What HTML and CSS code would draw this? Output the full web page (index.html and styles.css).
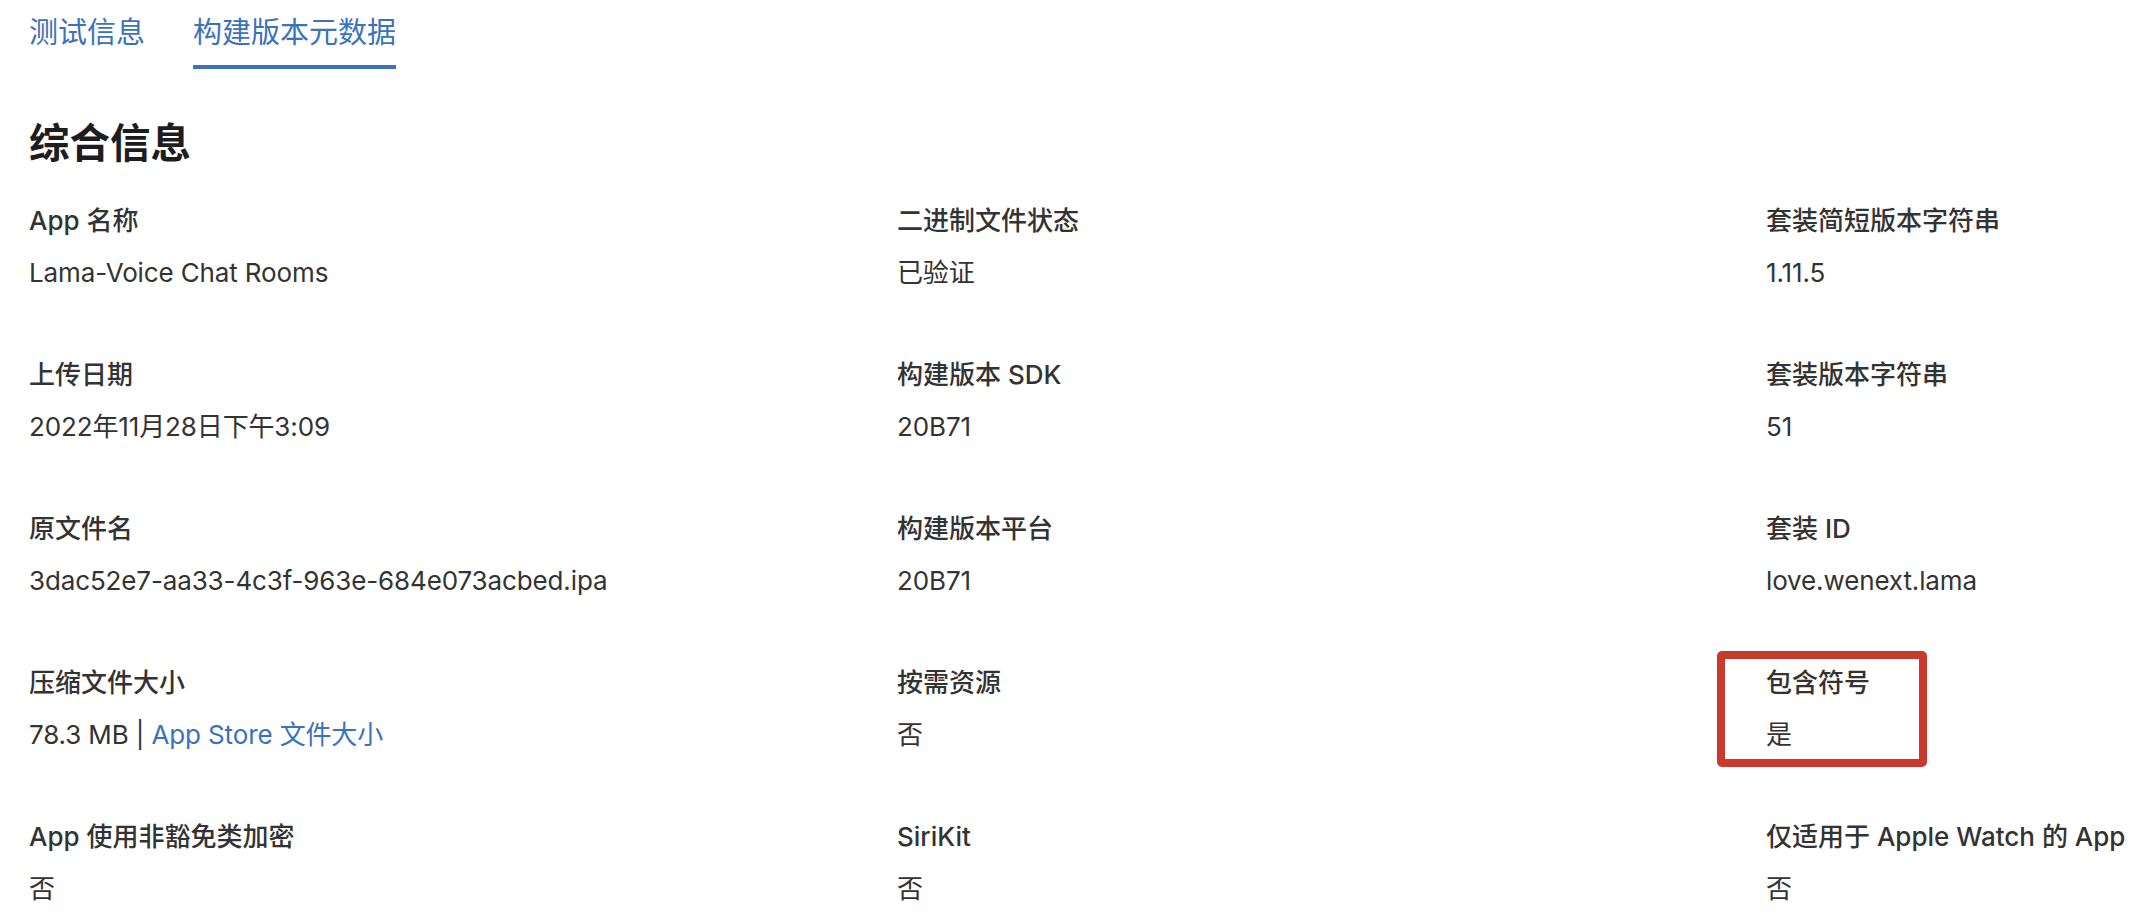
FILE: index.html
```html
<!DOCTYPE html>
<html lang="zh-CN">
<head>
<meta charset="utf-8">
<title>构建版本元数据</title>
<link rel="stylesheet" href="styles.css">
</head>
<body>
<div class="page">
  <nav class="tabs">
    <div class="tab">测试信息</div>
    <div class="tab active">构建版本元数据</div>
  </nav>
  <h1 class="heading">综合信息</h1>
  <div class="grid">
    <div class="cell"><div class="label">App 名称</div><div class="value">Lama-Voice Chat Rooms</div></div>
    <div class="cell"><div class="label">二进制文件状态</div><div class="value">已验证</div></div>
    <div class="cell"><div class="label">套装简短版本字符串</div><div class="value">1.11.5</div></div>

    <div class="cell"><div class="label">上传日期</div><div class="value">2022年11月28日下午3:09</div></div>
    <div class="cell"><div class="label">构建版本 SDK</div><div class="value">20B71</div></div>
    <div class="cell"><div class="label">套装版本字符串</div><div class="value">51</div></div>

    <div class="cell"><div class="label">原文件名</div><div class="value">3dac52e7-aa33-4c3f-963e-684e073acbed.ipa</div></div>
    <div class="cell"><div class="label">构建版本平台</div><div class="value">20B71</div></div>
    <div class="cell"><div class="label">套装 ID</div><div class="value">love.wenext.lama</div></div>

    <div class="cell"><div class="label">压缩文件大小</div><div class="value">78.3 MB | <a class="link" href="#">App Store 文件大小</a></div></div>
    <div class="cell"><div class="label">按需资源</div><div class="value">否</div></div>
    <div class="cell highlighted"><div class="label">包含符号</div><div class="value">是</div><div class="mark"></div></div>

    <div class="cell"><div class="label">App 使用非豁免类加密</div><div class="value">否</div></div>
    <div class="cell"><div class="label">SiriKit</div><div class="value">否</div></div>
    <div class="cell"><div class="label">仅适用于 Apple Watch 的 App</div><div class="value">否</div></div>
  </div>
</div>
</body>
</html>
```
FILE: styles.css
```css
html, body {
  margin: 0;
  padding: 0;
  background: #ffffff;
}

body {
  font-family: "Inter", "Noto Sans CJK SC", sans-serif;
  color: #333333;
  overflow: hidden;
}

.page {
  padding: 13px 0 0 29px;
}

.tabs {
  display: flex;
  gap: 48px;
  align-items: flex-start;
}

.tab {
  font-size: 29px;
  line-height: 40px;
  color: #3a72bd;
  padding-bottom: 12px;
  border-bottom: 4px solid transparent;
}

.tab.active {
  border-bottom-color: #3a72bd;
}

.heading {
  margin: 50px 0 0 0;
  font-size: 40.5px;
  line-height: 50px;
  font-weight: 700;
  color: #1d1d1f;
}

.grid {
  margin-top: 34px;
  display: grid;
  grid-template-columns: 868px 869px minmax(0, 1fr);
  row-gap: 66.5px;
}

.cell {
  position: relative;
  display: flex;
  flex-direction: column;
  gap: 15.5px;
}

.label {
  font-size: 26px;
  line-height: 36px;
  font-weight: 500;
  color: #333333;
  white-space: nowrap;
}

.value {
  font-size: 26px;
  line-height: 36px;
  font-weight: 400;
  color: #333333;
  letter-spacing: -0.13px;
  white-space: nowrap;
}

.link {
  color: #3a72bd;
  text-decoration: none;
}

.mark {
  position: absolute;
  left: -49px;
  top: -14px;
  width: 210px;
  height: 116px;
  box-sizing: border-box;
  border: 8px solid #c9392c;
  border-radius: 5px;
}
```
